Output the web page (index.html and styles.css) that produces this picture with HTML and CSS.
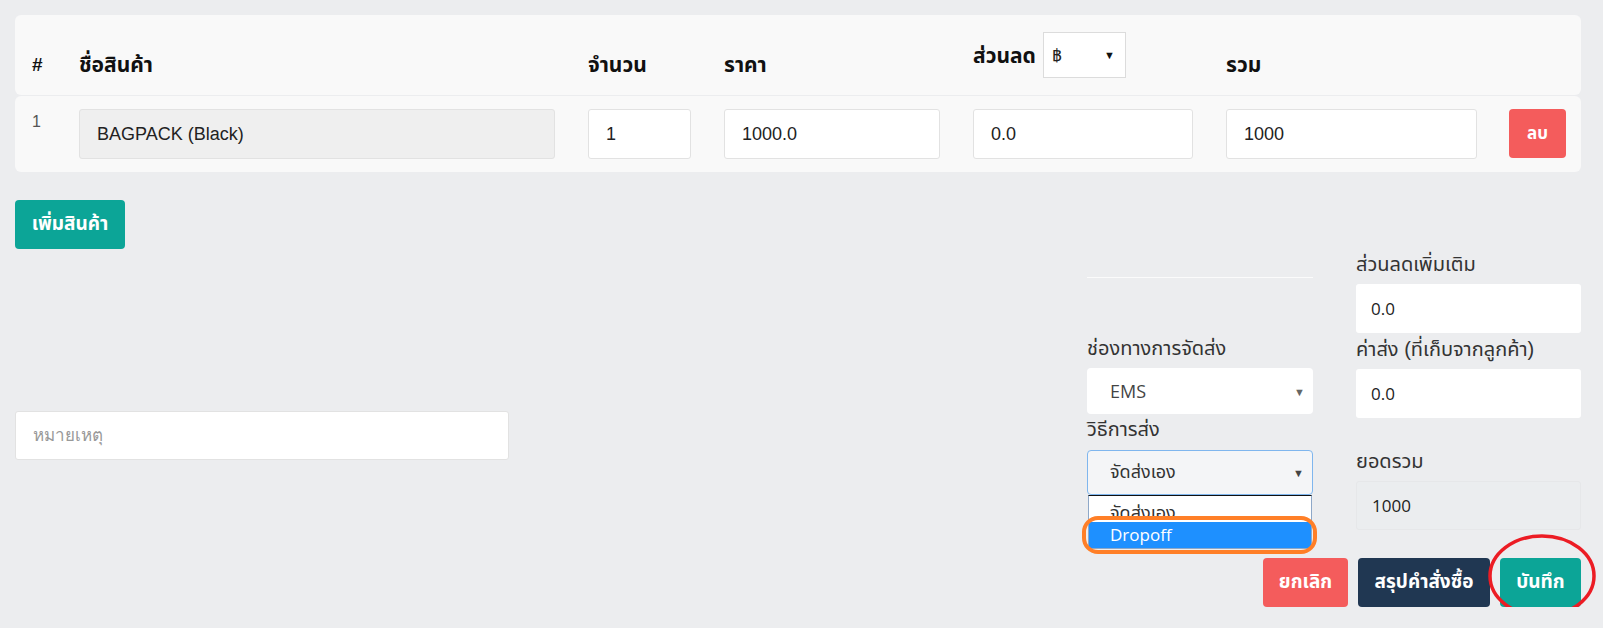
FILE: index.html
```html
<!doctype html>
<html>
<head>
<meta charset="utf-8">
<link rel="stylesheet" href="styles.css">
</head>
<body>
<div class="page">

	<div class="items">
		<div class="row head">
			<div class="cell">#</div>
			<div class="cell">ชื่อสินค้า</div>
			<div class="cell">จำนวน</div>
			<div class="cell">ราคา</div>
			<div class="cell disc-head">
				<span>ส่วนลด</span>
				<div class="pick unit"><span>฿</span><span class="arrow">▼</span></div>
			</div>
			<div class="cell">รวม</div>
			<div class="cell"></div>
		</div>
		<div class="row item">
			<div class="cell num">1</div>
			<div class="cell"><input class="field locked" value="BAGPACK (Black)" readonly></div>
			<div class="cell"><input class="field" value="1"></div>
			<div class="cell"><input class="field" value="1000.0"></div>
			<div class="cell"><input class="field" value="0.0"></div>
			<div class="cell"><input class="field" value="1000"></div>
			<div class="cell del-cell"><button class="btn red del">ลบ</button></div>
		</div>
	</div>

	<button class="btn teal add">เพิ่มสินค้า</button>

	<div class="lower">
		<div class="remark">
			<input class="field note" placeholder="หมายเหตุ">
		</div>

		<div class="summary">
			<div class="cols">
				<div class="col">
					<div class="sep"></div>
					<label class="lbl ship-lbl">ช่องทางการจัดส่ง</label>
					<div class="pick ship"><span>EMS</span><span class="arrow">▼</span></div>
					<label class="lbl method-lbl">วิธีการส่ง</label>
					<div class="dd">
						<div class="pick method"><span>จัดส่งเอง</span><span class="arrow">▼</span></div>
						<ul class="dd-list">
							<li>จัดส่งเอง</li>
							<li class="hl">Dropoff</li>
						</ul>
						<div class="mark-orange"></div>
					</div>
				</div>
				<div class="col">
					<label class="lbl">ส่วนลดเพิ่มเติม</label>
					<input class="field plain" value="0.0">
					<label class="lbl fee-lbl">ค่าส่ง (ที่เก็บจากลูกค้า)</label>
					<input class="field plain" value="0.0">
					<label class="lbl total-lbl">ยอดรวม</label>
					<input class="field plain sum" value="1000" readonly>
				</div>
			</div>

			<div class="actions">
				<button class="btn red cancel">ยกเลิก</button>
				<button class="btn navy review">สรุปคำสั่งซื้อ</button>
				<div class="save-wrap">
					<button class="btn teal save">บันทึก</button>
					<svg class="mark-red" width="108" height="84" viewBox="0 0 108 84">
						<ellipse cx="54" cy="42" rx="52" ry="40" fill="none" stroke="#ec1c24" stroke-width="3.5"/>
					</svg>
				</div>
			</div>
		</div>
	</div>

</div>
</body>
</html>
```

FILE: styles.css
```css
*{margin:0; padding:0; list-style:none; box-sizing:border-box;}
body{
	background:#ecedef;
	font-family:"Liberation Sans", "Noto Sans Thai", "Kanit", "Prompt", Arial, sans-serif;
	color:#333;
}
.page{padding:15px 22px 0 15px;}

/* item table */
.row{
	display:grid;
	grid-template-columns:47px 509px 136px 249px 253px 284px 1fr;
	background:#f9f9f9;
	border-radius:6px;
}
.cell{padding:0 16px 0 17px;}
.head{
	height:80px; padding-bottom:17px;
	align-items:end;
	font-size:21px; font-weight:bold; line-height:27px;
	color:#111;
}
.head .cell:first-child{font-size:19px;}
.disc-head{display:flex; align-items:center; gap:7px;}
.item{
	margin-top:1px; height:76px; padding-top:13px;
	align-items:start;
}
.num{font-size:16px; line-height:26px; color:#555;}
.del-cell{padding:0 15px 0 16px;}

.field{
	display:block; width:100%; height:50px;
	border:1px solid #e2e2e2; border-radius:3px;
	background:#fff;
	padding:0 17px;
	font-family:"Liberation Sans", Arial, sans-serif;
	font-size:18px; color:#222;
	outline:none;
}
.field.locked{background:#efefef;}
.field::placeholder{color:#999; font-size:17px;}

.pick{
	display:flex; align-items:center; justify-content:space-between;
	background:#fff;
}
.arrow{font-size:11px; color:#111;}
.unit{
	width:83px; height:46px;
	border:1px solid #dcdcdc;
	padding:0 10px 0 8px;
	font-size:17px; font-weight:normal; color:#222;
}

.btn{
	border:0; border-radius:4px;
	color:#fff; font-weight:bold; font-size:19px;
	font-family:"Liberation Sans", "Noto Sans Thai", Arial, sans-serif;
	height:49px; cursor:pointer;
}
.teal{background:#0ca597;}
.red{background:#f45c5c;}
.navy{background:#203752;}
.del{width:57px; font-size:17px;}
.add{display:block; margin-top:28px; width:110px;}

/* lower part */
.lower{display:flex; justify-content:space-between;}
.remark{width:494px; padding-top:162px;}
.note{height:49px; padding:0 17px;}

.summary{width:494px;}
.cols{display:grid; grid-template-columns:226px 225px; column-gap:43px;}
.col{display:flex; flex-direction:column;}

.lbl{
	display:block; height:30px; line-height:30px;
	font-size:20px; color:#333;
	margin-bottom:5px;
}
.fee-lbl{margin-top:1px;}
.total-lbl{margin-top:28px;}
.plain{height:49px; border:0; border-radius:3px; padding:0 15px;
	font-family:"Open Sans", sans-serif; font-size:17px;}
.sum{background:#ebedef; border:1px solid #e6e7e9;}

.sep{height:1px; background:#fbfbfb; margin-top:28px;}
.ship-lbl{margin-top:55px;}
.ship{
	height:46px; border-radius:4px;
	padding:0 8px 0 23px;
	font-family:"Open Sans", sans-serif; font-size:18px; color:#444;
}
.ship .arrow{color:#666;}
.method-lbl{margin-bottom:6px;}

.dd{position:relative;}
.method{
	height:45px; border:1px solid #7fb6ee; border-radius:4px;
	background:#f4f5f7;
	padding:0 8px 0 22px;
	font-size:18px; color:#333;
}
.method .arrow{color:#444;}
.dd-list{
	position:absolute; left:1px; right:1px; top:100%;
	background:#fff;
	border:1px solid #8ea8c8; border-top-color:#111;
	font-size:18px;
}
.dd-list li{padding-left:21px; height:26px; line-height:26px; color:#333; overflow:hidden;}
.dd-list li:first-child{line-height:34px;}
.dd-list .hl{background:#1e90ff; color:#fff; font-family:"Open Sans", sans-serif; font-size:17px;}
.mark-orange{
	position:absolute; left:-5px; top:66px;
	width:235px; height:38px;
	border:4px solid #ff7f27; border-radius:16px;
}

.actions{display:flex; justify-content:flex-end; gap:10px; margin-top:28px;}
.cancel{width:85px;}
.review{width:132px;}
.save{width:81px;}
.save-wrap{position:relative;}
.mark-red{position:absolute; left:-12px; top:-24px;}
```
